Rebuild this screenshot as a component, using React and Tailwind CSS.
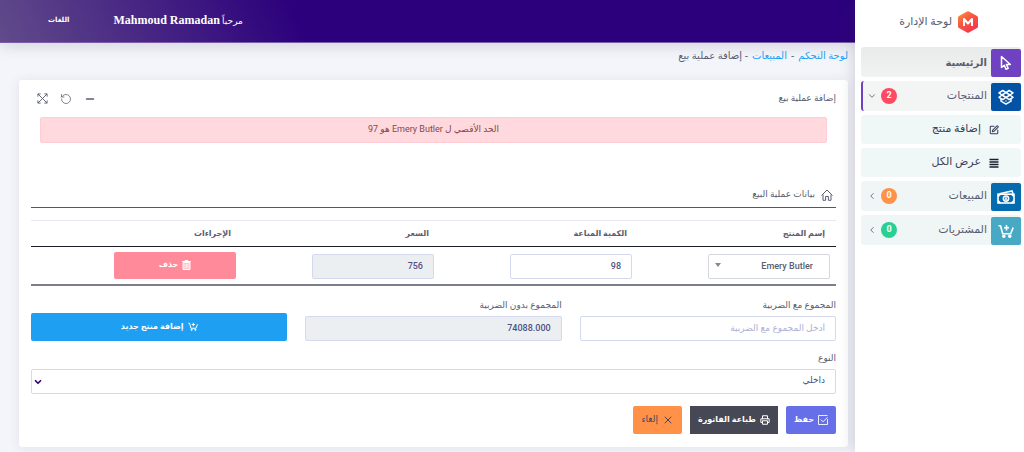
import React from 'react';
import { ChevronDown, ChevronLeft, Minus, Printer, RotateCcw, SquarePen, X } from 'lucide-react';

function LogoIcon() {
    return (
        <svg viewBox="0 0 20 22" className="h-[22px] w-5">
            <defs>
                <linearGradient id="logo" x1="0" y1="0" x2="0.7" y2="1">
                    <stop offset="0" stopColor="#fb9a3c" />
                    <stop offset="0.45" stopColor="#f9583f" />
                    <stop offset="1" stopColor="#f4364c" />
                </linearGradient>
            </defs>
            <path d="M9 .5q1-.6 2 0l8 4.4q1 .6 1 1.7v8.8q0 1.1-1 1.7l-8 4.4q-1 .6-2 0l-8-4.4q-1-.6-1-1.7V6.600q0-1.100 1-1.700z" fill="url(#logo)" />
            <path d="M6 15V8l4 4.500L14 8v7" fill="none" stroke="#fff" strokeWidth="2" strokeLinejoin="round" />
        </svg>
    );
}

function PointerIcon() {
    return (
        <svg viewBox="0 0 12 16" className="h-4 w-3" fill="none" stroke="#fff" strokeWidth="1.5" strokeLinejoin="round">
            <path d="M1.500 1.500v11l2.800-2.200 1.700 4 2.200-1-1.800-3.800h4z" />
        </svg>
    );
}

function BoxIcon() {
    return (
        <svg viewBox="0 0 16 16" className="size-4" fill="none" stroke="#fff" strokeWidth="1.5" strokeLinejoin="round">
            <path d="M4.800 1.500 8 3.600 4 6 1 3.800zM11.200 1.500 8 3.600 12 6l3-2.200zM4 6l4 2.500-3.200 2.200L1 8.300zM12 6 8 8.500l3.200 2.200L15 8.300z" />
            <path d="M3 10v2.200l5 2.900 5-2.900V10M8 11.500v1" />
        </svg>
    );
}

function CashIcon() {
    return (
        <svg viewBox="0 0 18 14" className="h-3.5 w-[18px]" fill="none" stroke="#fff" strokeWidth="1.6">
            <path d="M2.500 3.800 15 1l1 2.800" />
            <rect x="1" y="4.200" width="16" height="8.800" />
            <circle cx="9" cy="8.600" r="2.600" />
            <path d="M9 7.200V10" />
            <path d="M1 6.500 3.500 4.200M17 6.500l-2.500-2.300M1 10.700 3.500 13M17 10.700 14.500 13" />
        </svg>
    );
}

function CartIcon({ className }) {
    return (
        <svg viewBox="0 0 16 14" className={className} fill="none" stroke="#fff" strokeWidth="1.6">
            <path d="M.5 1.800h2l2.200 8h8L15.200 3.500" />
            <path d="M8.500 1v5.500M6 3.800h5" />
            <circle cx="5.800" cy="12.200" r="1" fill="#fff" />
            <circle cx="11.800" cy="12.200" r="1" fill="#fff" />
        </svg>
    );
}

function ListIcon() {
    return (
        <svg viewBox="0 0 10 10" className="size-2.5" stroke="#1b1f30" strokeWidth="1.5">
            <path d="M.5 1.500h9M.5 4h9M.5 6.500h9M.5 9h9" />
        </svg>
    );
}

function ExpandIcon() {
    return (
        <svg viewBox="0 0 12 12" className="size-[11px]" fill="none" stroke="currentColor">
            <path d="M1 4V1h3M8 1h3v3M11 8v3H8M4 11H1V8M1 1l10 10M11 1 1 11" />
        </svg>
    );
}

function HomeIcon() {
    return (
        <svg viewBox="0 0 12 12" className="size-3" fill="none" stroke="currentColor" strokeLinejoin="round">
            <path d="M.5 6.500 6 1l5.500 5.500M2 5.500v5.800h2.600V7.500h2.800v3.800H10V5.500" />
        </svg>
    );
}

function TrashIcon() {
    return (
        <svg viewBox="0 0 9 10" className="h-2.5 w-[9px]" fill="none" stroke="#fff">
            <path d="M0 1.500h9M3 1.500V.5h3v1" />
            <path d="M1 2.500h7v7H1z" fill="#fff" fillOpacity="0.5" />
            <path d="M3 4v4M4.500 4v4M6 4v4" strokeWidth="0.6" />
        </svg>
    );
}

function CheckIcon() {
    return (
        <svg viewBox="0 0 11 11" className="size-2.5" fill="none" stroke="#fff">
            <path d="M10.500 4.500v6H.5V.5h10M3 5l2.500 2.500 5-5" />
        </svg>
    );
}

function MenuItem({ label, icon, iconClass, badge, badgeClass, open, rowClass }) {
    return (
        <li>
            <a href="#" className={`flex h-[30px] items-end rounded-[3px] ${rowClass}`}>
                <span className={`flex h-7 w-[30px] items-center justify-center rounded-[2px] ${iconClass}`}>{icon}</span>
                <span className="flex h-full flex-1 items-center pr-1">{label}</span>
                {badge && (
                    <span className={`flex h-full items-center gap-1 ${open ? 'pl-1' : 'pl-1.5'}`}>
                        <span className={`flex size-4 items-center justify-center rounded-full text-[9px] font-bold text-white ${badgeClass}`}>{badge}</span>
                        {open ? <ChevronDown size={10} strokeWidth={2} /> : <ChevronLeft size={10} strokeWidth={2} />}
                    </span>
                )}
            </a>
        </li>
    );
}

function SubItem({ label, icon }) {
    return (
        <li>
            <a href="#" className="flex h-[29px] items-center gap-2 rounded-[3px] bg-[#f0f7f7] pr-[22px] text-[#3b3f5c]">
                {icon}
                {label}
            </a>
        </li>
    );
}

const inputClass = 'h-[25px] w-full rounded-[2px] border border-[#d5d9ee] px-2.5 text-[9px] font-medium text-[#4e5185] placeholder:font-normal placeholder:text-[#aeb0d6]';
const disabledClass = 'h-[25px] w-full rounded-[2px] border border-[#d5d9ee] bg-[#eceff1] px-2.5 text-[9px] font-medium text-[#4e5185]';

export default function App() {
    return (
        <div dir="rtl" className='flex min-h-screen bg-[#f4f5fa] font-["Roboto","DejaVu_Sans",sans-serif] text-[#5a5d70]'>
            {/* Sidebar */}
            <aside className="relative z-10 w-[169px] shrink-0 bg-white pr-[3px] pl-1.5 shadow-[0_0_14px_rgba(60,60,90,0.25)]">
                <a href="#" className='flex h-[43px] items-center gap-1.5 pr-[43px] font-["Liberation_Serif","DejaVu_Sans",serif] text-[11px]'>
                    <LogoIcon />
                    لوحة الإدارة
                </a>
                <ul className="mt-1 flex flex-col gap-1 text-[11px]">
                    <MenuItem label="الرئيسية" rowClass="bg-linear-to-b from-[#e9eaea] to-[#f1f2f2] text-[10px] font-bold" iconClass="bg-[#6f42c1]" icon={<PointerIcon />} />
                    <MenuItem label="المنتجات" rowClass="border-l-2 border-[#6f42c1] bg-[#f3f4f4]" iconClass="bg-[#0452a5]" icon={<BoxIcon />} badge="2" badgeClass="bg-[#ff4961]" open />
                    <SubItem label="إضافة منتج" icon={<SquarePen size={10} strokeWidth={2.5} />} />
                    <SubItem label="عرض الكل" icon={<ListIcon />} />
                    <MenuItem label="المبيعات" rowClass="bg-[#f0f6f6]" iconClass="bg-[#046bae]" icon={<CashIcon />} badge="0" badgeClass="bg-[#ff9149]" />
                    <MenuItem label="المشتريات" rowClass="bg-[#f0f6f6]" iconClass="bg-[#48a9c5]" icon={<CartIcon className="h-3.5 w-4" />} badge="0" badgeClass="bg-[#28d094]" />
                </ul>
            </aside>

            <div className="min-w-0 flex-1">
                {/* Top bar */}
                <header className="flex h-[43px] items-center justify-end border-b border-[#7a5cab] bg-[linear-gradient(65deg,#614b8a,#2c007c_280px)] pb-0.5 text-white shadow-[0_2px_16px_rgba(60,60,90,0.2)]">
                    <a href="#" className='ml-11 font-["Liberation_Serif","DejaVu_Sans",serif] text-[9px]'>
                        مرحباً <b className="text-[12px]">Mahmoud Ramadan</b>
                    </a>
                    <a href="#" className="ml-12 text-[7px] font-bold">اللغات</a>
                </header>

                <main className="pr-[7px] pl-[19px]">
                    <nav className='flex h-[37px] gap-1 pt-1 font-["Liberation_Serif","DejaVu_Sans",serif] text-[10px] leading-[18px]'>
                        <a href="#" className="text-[#1e9ff2]">لوحة التحكم</a>
                        <span>-</span>
                        <a href="#" className="text-[#1e9ff2]">المبيعات</a>
                        <span>- إضافة عملية بيع</span>
                    </nav>

                    <section className="rounded-[3px] bg-white px-3 pb-[13px] shadow-[0_1px_12px_rgba(60,60,110,0.1)]">
                        <div className="flex h-[37px] items-center justify-between">
                            <h4 className='font-["Liberation_Serif","DejaVu_Sans",serif] text-[9px]'>إضافة عملية بيع</h4>
                            <div className="flex items-center gap-3 pl-1.5">
                                <button aria-label="طي"><Minus size={12} strokeWidth={3} /></button>
                                <button aria-label="تحديث"><RotateCcw size={12} strokeWidth={1.5} /></button>
                                <button aria-label="تكبير"><ExpandIcon /></button>
                            </div>
                        </div>

                        <div className="mx-[9px] flex h-[26px] items-center justify-center rounded-[2px] border border-[#ffcdd3] bg-[#ffd9dd] text-[9px] text-[#85464f]">
                            الحد الأقصي ل Emery Butler هو 97
                        </div>

                        <h4 className='mt-10 flex h-[25px] items-center gap-1.5 border-b border-[#555763] pr-[3px] font-["Liberation_Serif","DejaVu_Sans",serif] text-[9px]'>
                            <HomeIcon />
                            بيانات عملية البيع
                        </h4>

                        <table className="mt-3 w-full table-fixed border-t border-b-2 border-t-[#e6e8f2] border-b-[#7c7f87]">
                            <thead>
                                <tr className="h-[26px] border-b border-[#1a1c26] text-right text-[8px]">
                                    <th className="w-[198px] pr-[11px]">إسم المنتج</th>
                                    <th className="w-[198px] pr-[11px]">الكمية المباعة</th>
                                    <th className="w-[198px] pr-[11px]">السعر</th>
                                    <th className="pr-[11px]">الإجراءات</th>
                                </tr>
                            </thead>
                            <tbody>
                                <tr className="h-[38px]">
                                    <td className="pr-1.5">
                                        <div className="relative w-[122px]">
                                            <select aria-label="إسم المنتج" className="h-[25px] w-full appearance-none rounded-[2px] border border-[#d5d6de] pr-4 text-[9px] font-medium">
                                                <option>Emery Butler</option>
                                            </select>
                                            <span className="pointer-events-none absolute top-[11px] left-[7px] border-x-[3px] border-t-4 border-x-transparent border-t-[#888]" />
                                        </div>
                                    </td>
                                    <td className="pr-1.5"><div className="w-[122px]"><input aria-label="الكمية المباعة" defaultValue="98" className={inputClass} /></div></td>
                                    <td className="pr-1.5"><div className="w-[122px]"><input aria-label="السعر" readOnly value="756" className={disabledClass} /></div></td>
                                    <td className="pr-1.5">
                                        <button className="flex h-[27px] w-[122px] items-center justify-center gap-1 rounded-[2px] bg-[#ff8a99] text-[8px] font-bold text-white">
                                            <TrashIcon />
                                            حذف
                                        </button>
                                    </td>
                                </tr>
                            </tbody>
                        </table>

                        <div className="mt-3 grid grid-cols-3 items-end gap-[18px] text-[9px]">
                            <label className="flex flex-col gap-1">
                                <span className="leading-[14px]">المجموع مع الضربية</span>
                                <input placeholder="أدخل المجموع مع الضربية" className={inputClass} />
                            </label>
                            <label className="flex flex-col gap-1">
                                <span className="leading-[14px]">المجموع بدون الضربية</span>
                                <input readOnly value="74088.000" className={disabledClass} />
                            </label>
                            <button className="flex h-7 items-center justify-center gap-1 rounded-[2px] bg-[#1e9ff2] text-[8px] font-bold text-white">
                                <CartIcon className="h-[9px] w-2.5" />
                                إضافة منتج جديد
                            </button>
                        </div>

                        <label className="mt-2.5 flex flex-col gap-1 text-[9px]">
                            <span className="leading-[14px]">النوع</span>
                            <span className="relative">
                                <select className="h-[25px] w-full appearance-none rounded-[2px] border border-[#d5d9ee] pr-2.5 text-[9px] text-[#4e5185]">
                                    <option>داخلي</option>
                                </select>
                                <ChevronDown size={10} strokeWidth={4} className="pointer-events-none absolute top-2 left-[2px] text-[#2c007c]" />
                            </span>
                        </label>

                        <div className="mt-3 flex gap-2 text-[8px] font-bold text-white">
                            <button className="flex h-7 items-center gap-1 rounded-[2px] bg-[#666ee8] px-2">
                                <CheckIcon />
                                حفظ
                            </button>
                            <button className="flex h-7 items-center gap-1 bg-[#464855] px-2">
                                <Printer size={10} strokeWidth={2.5} />
                                طباعة الفاتورة
                            </button>
                            <button className="flex h-7 items-center gap-1 rounded-[2px] bg-[#ff9149] px-2 text-[9px] font-normal text-[#464855]">
                                <X size={12} />
                                إلغاء
                            </button>
                        </div>
                    </section>
                </main>
            </div>
        </div>
    );
}
